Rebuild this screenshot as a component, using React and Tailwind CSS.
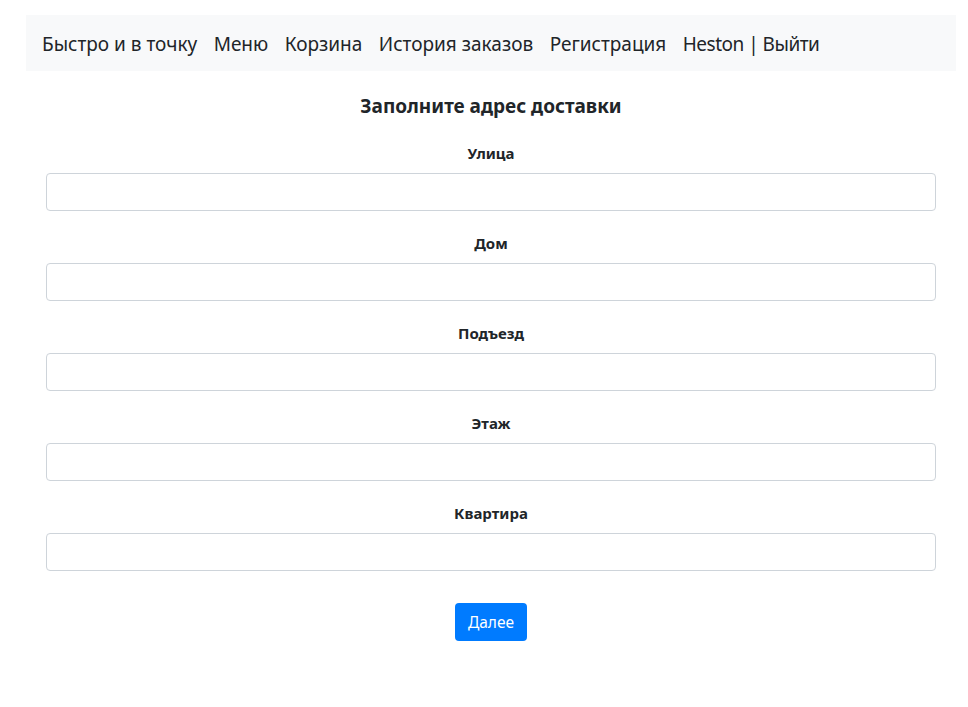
export default function App() {
  const fields = ["Улица", "Дом", "Подъезд", "Этаж", "Квартира"];
  const nav = ["Быстро и в точку", "Меню", "Корзина", "История заказов", "Регистрация"];
  return (
    <div className="min-h-[707px] bg-white pl-[26px] pr-[12px] pt-[15px] text-[#212529]" style={{ fontFamily: '"Noto Sans", "Open Sans", sans-serif' }}>
      <nav className="flex h-[56px] items-center gap-[16.5px] bg-[#f8f9fa] px-[16px] pt-[2px]">
        {nav.map((n) => (
          <span key={n} className="text-[19px] leading-[30px] text-[#212529]">{n}</span>
        ))}
        <span className="text-[19px] leading-[30px] tracking-[-0.5px] text-[#212529]">Heston | Выйти</span>
      </nav>
      <div className="px-[20px]">
        <h5 className="mt-[24px] text-center text-[19px] font-bold leading-[22px]">Заполните адрес доставки</h5>
        <div className="mt-[24px] flex flex-col">
          {fields.map((f) => (
            <div key={f} className="mb-[20px] flex flex-col">
              <label className="mb-[8px] text-center text-[15px] font-bold leading-[24px]">{f}</label>
              <input className="h-[38px] w-full rounded-[4px] border border-[#ced4da] px-[12px] text-[16px] outline-none" />
            </div>
          ))}
        </div>
        <div className="mt-[12px] flex justify-center">
          <button className="h-[38px] rounded-[4px] bg-[#007bff] px-[12.5px] text-[15.5px] leading-[24px] text-white">Далее</button>
        </div>
      </div>
    </div>
  );
}
